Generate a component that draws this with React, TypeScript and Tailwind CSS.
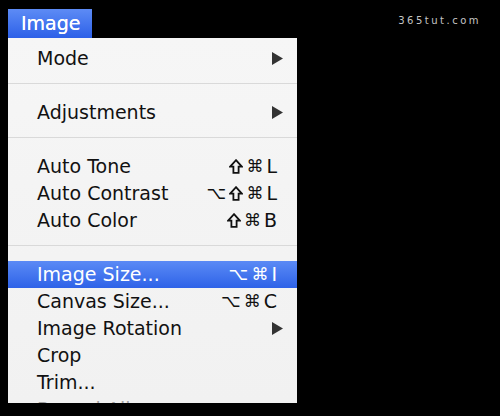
import React from 'react';

type Item =
  | { kind: 'sep' }
  | { kind: 'item'; label: string; keys?: string[]; sub?: boolean; active?: boolean; disabled?: boolean };

const items: Item[] = [
  { kind: 'item', label: 'Mode', sub: true },
  { kind: 'sep' },
  { kind: 'item', label: 'Adjustments', sub: true },
  { kind: 'sep' },
  { kind: 'item', label: 'Auto Tone', keys: ['⇧', '⌘', 'L'] },
  { kind: 'item', label: 'Auto Contrast', keys: ['⌥', '⇧', '⌘', 'L'] },
  { kind: 'item', label: 'Auto Color', keys: ['⇧', '⌘', 'B'] },
  { kind: 'sep' },
  { kind: 'item', label: 'Image Size...', keys: ['⌥', '⌘', 'I'], active: true },
  { kind: 'item', label: 'Canvas Size...', keys: ['⌥', '⌘', 'C'] },
  { kind: 'item', label: 'Image Rotation', sub: true },
  { kind: 'item', label: 'Crop' },
  { kind: 'item', label: 'Trim...' },
  { kind: 'item', label: 'Reveal All', disabled: true },
];

function Arrow({ white }: { white?: boolean }) {
  return (
    <svg width="11" height="13" viewBox="0 0 11 13" className="mr-[-6px]">
      <polygon points="0,0 11,6.5 0,13" fill={white ? '#ffffff' : '#333333'} />
    </svg>
  );
}

// shift key glyph, drawn since the fallback font's one is too thin
function ShiftIcon() {
  return (
    <svg width="14" height="15" viewBox="0 0 14 15" className="mt-[-1px]">
      <polygon
        points="7,1.2 12.8,7.6 9.6,7.6 9.6,13.8 4.4,13.8 4.4,7.6 1.2,7.6"
        fill="none"
        stroke="currentColor"
        strokeWidth="1.8"
        strokeLinejoin="miter"
      />
    </svg>
  );
}

function Keys({ keys }: { keys: string[] }) {
  return (
    <span className="flex items-center gap-[3px]">
      {keys.map((k, i) =>
        k === '⇧' ? (
          <ShiftIcon key={i} />
        ) : (
          <span key={i} className={k === '⌘' || k === '⌥' ? 'text-[17px]' : ''}>
            {k}
          </span>
        ),
      )}
    </span>
  );
}

export default function App() {
  return (
    <div className="flex h-[416px] w-[500px] overflow-hidden bg-black font-['DejaVu_Sans',sans-serif]">
      <div className="flex flex-col pl-[8px] pt-[9px]">
        <div className="flex h-[29px] w-[84px] items-center bg-gradient-to-b from-[#5d8bf5] to-[#2d60e8] pl-[13px] text-[19px] text-white [text-shadow:0_0_0.4px_#fff]">
          Image
        </div>
        <div className="h-[365px] w-[289px] overflow-hidden bg-gradient-to-b from-[#f6f6f6] to-[#f1f1f1] pt-[7px]">
          {items.map((it, i) =>
            it.kind === 'sep' ? (
              <div key={i} className="h-[27px] pt-[11px]">
                <div className="h-px bg-[#d9d9d9]" />
              </div>
            ) : (
              <div
                key={i}
                className={
                  'flex h-[27px] items-center justify-between pl-[29px] pr-[20px] text-[19px] ' +
                  (it.active
                    ? 'bg-gradient-to-b from-[#5b8af5] to-[#2e62e8] text-white'
                    : it.disabled
                      ? 'text-[#a0a0a0]'
                      : 'text-[#111111]')
                }
              >
                <span>{it.label}</span>
                {it.keys && <Keys keys={it.keys} />}
                {it.sub && <Arrow white={it.active} />}
              </div>
            ),
          )}
        </div>
      </div>
      <div className="ml-auto pr-[19px] pt-[13px] text-[10px] tracking-[2.5px] text-[#c4c4c4]">365tut.com</div>
    </div>
  );
}
